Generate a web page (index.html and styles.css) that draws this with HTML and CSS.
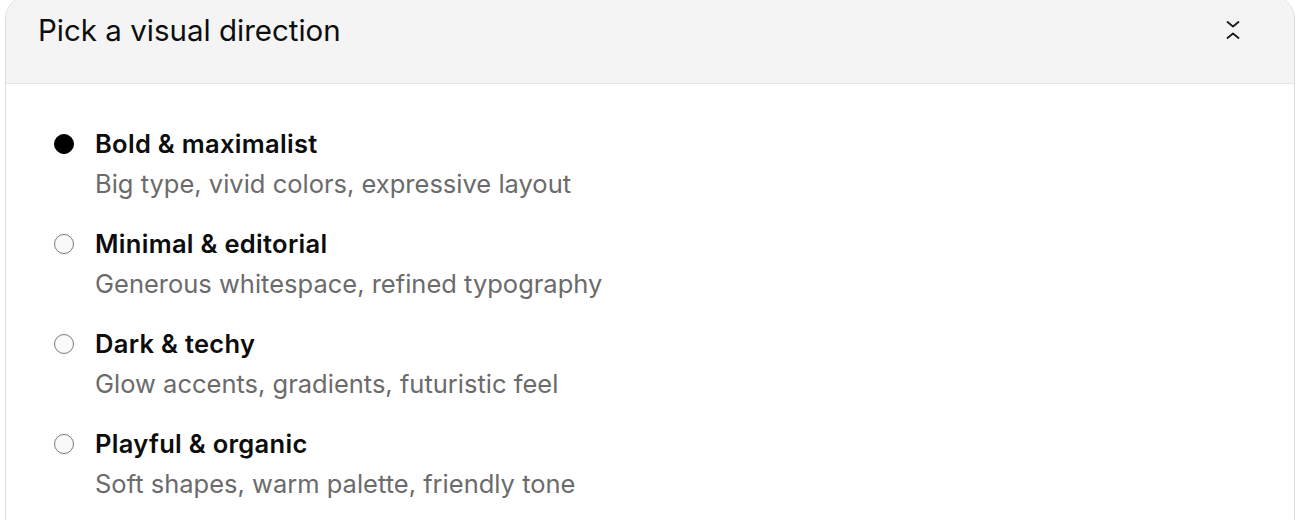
FILE: index.html
```html
<!DOCTYPE html>
<html lang="en">
<head>
<meta charset="utf-8">
<title>Pick a visual direction</title>
<link rel="stylesheet" href="styles.css">
</head>
<body>
<section class="card">
  <header class="card-header">
    <h2 class="title">Pick a visual direction</h2>
    <button class="toggle" aria-label="Collapse">
      <svg width="14" height="24" viewBox="0 0 14 24" fill="none" stroke="#1a1a1a" stroke-width="1.8" stroke-linecap="round" stroke-linejoin="round">
        <path d="M1.5 4 L7 8.5 L12.5 4"/>
        <path d="M1.5 20 L7 15.5 L12.5 20"/>
      </svg>
    </button>
  </header>
  <div class="options">
    <label class="option">
      <span class="radio checked"></span>
      <span class="text">
        <span class="label">Bold &amp; maximalist</span>
        <span class="desc">Big type, vivid colors, expressive layout</span>
      </span>
    </label>
    <label class="option">
      <span class="radio"></span>
      <span class="text">
        <span class="label">Minimal &amp; editorial</span>
        <span class="desc">Generous whitespace, refined typography</span>
      </span>
    </label>
    <label class="option">
      <span class="radio"></span>
      <span class="text">
        <span class="label">Dark &amp; techy</span>
        <span class="desc">Glow accents, gradients, futuristic feel</span>
      </span>
    </label>
    <label class="option">
      <span class="radio"></span>
      <span class="text">
        <span class="label">Playful &amp; organic</span>
        <span class="desc">Soft shapes, warm palette, friendly tone</span>
      </span>
    </label>
  </div>
</section>
</body>
</html>
```

FILE: styles.css
```css
* { box-sizing: border-box; }

html, body {
  margin: 0;
  padding: 0;
  background: #ffffff;
  font-family: Inter, "Noto Sans", "Liberation Sans", sans-serif;
  color: #0d0d0d;
  overflow: hidden;
}

.card {
  margin: -5px 13px 0 5px;
  border: 1px solid #dcdcdc;
  border-radius: 24px;
  overflow: hidden;
  background: #ffffff;
}

.card-header {
  display: flex;
  align-items: center;
  justify-content: space-between;
  background: #f4f4f4;
  border-bottom: 1px solid #e3e3e3;
  height: 88px;
  padding: 0 54px 19px 32px;
}

.title {
  margin: 0;
  font-size: 29.5px;
  font-weight: 400;
  line-height: 36px;
  color: #0d0d0d;
}

.toggle {
  display: flex;
  align-items: center;
  justify-content: center;
  background: none;
  border: 0;
  padding: 0;
  width: 14px;
  height: 24px;
  cursor: pointer;
}

.options {
  display: flex;
  flex-direction: column;
  gap: 20px;
  padding: 40px 48px 40px 48px;
}

.option {
  display: flex;
  align-items: flex-start;
  gap: 21px;
  cursor: pointer;
}

.radio {
  flex: none;
  width: 20px;
  height: 20px;
  margin-top: 10px;
  border-radius: 50%;
  border: 1px solid #7a7a7a;
  background: #f9f9f9;
}

.radio.checked {
  background: #000000;
  border-color: #000000;
}

.text {
  display: flex;
  flex-direction: column;
}

.label {
  font-size: 25.5px;
  font-weight: 600;
  line-height: 40px;
  letter-spacing: 0.3px;
  color: #0d0d0d;
}

.desc {
  font-size: 25.5px;
  font-weight: 400;
  line-height: 40px;
  color: #6b6b6b;
}
```
